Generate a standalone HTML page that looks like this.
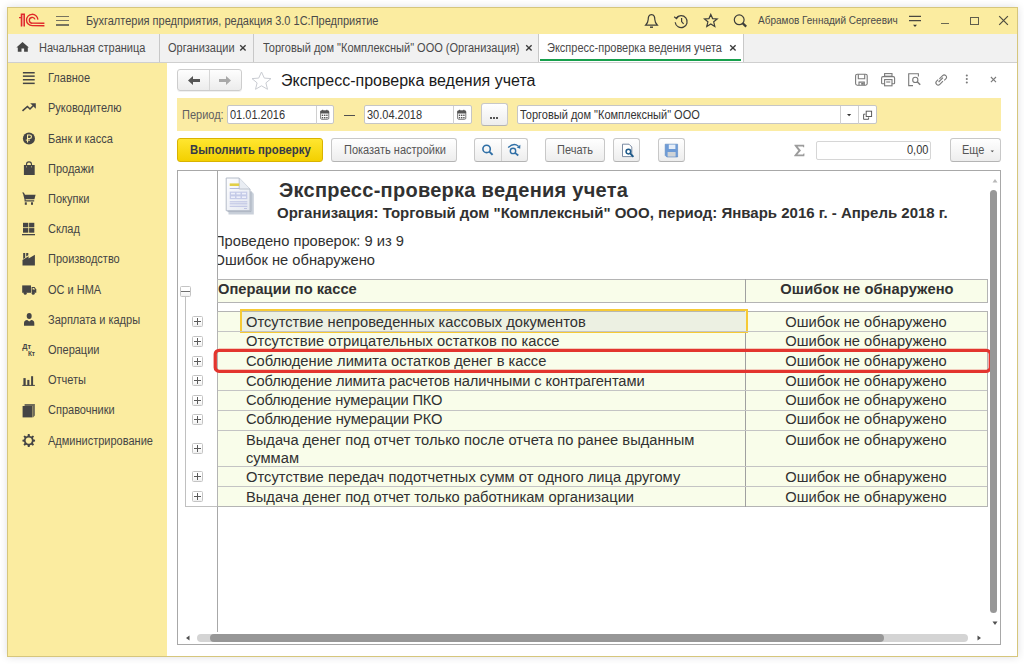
<!DOCTYPE html>
<html><head><meta charset="utf-8">
<style>
*{box-sizing:border-box;margin:0;padding:0}
html,body{width:1024px;height:664px;overflow:hidden;background:#fff;font-family:"Liberation Sans",sans-serif;color:#404040}
.a{position:absolute}
.t{position:absolute;white-space:nowrap;line-height:1}
#win{left:7px;top:7px;width:1011px;height:650px;border:1px solid #d6c67c;background:#fff;box-shadow:0 0 8px rgba(0,0,40,0.13)}
#title{left:8px;top:8px;width:1009px;height:26px;background:#fbeca0}
#tabs{left:8px;top:34px;width:1009px;height:29px;background:#f1f1f1;border-bottom:1px solid #cfcfcf}
#side{left:8px;top:63px;width:159px;height:593px;background:#fbeca0}
.sep{position:absolute;width:1px;background:#c8c8c8}
.pb{width:11px;height:11px;border:1px solid #c4c4c4;border-radius:1.5px;background:linear-gradient(#fff 50%,#f0f0f0)}
.pb::before{content:"";position:absolute;left:1px;top:4px;width:7px;height:1px;background:#5a5a5a}
.pb::after{content:"";position:absolute;left:4px;top:1px;width:1px;height:7px;background:#5a5a5a}
.si{font-size:12px;color:#454545;transform:scaleX(0.9167);transform-origin:0 0}
</style></head><body>
<div class="a" id="win"></div>
<div class="a" id="title"></div>
<div class="a" id="tabs"></div>
<div class="a" id="side"></div>

<!-- title bar -->
<svg class="a" style="left:16px;top:11px" width="32" height="19" viewBox="0 0 32 19">
  <path d="M5.4 3.2 H8.3 V15.3 H5.4 Z" fill="#f0a58a"/>
  <g fill="none" stroke="#e0282a" stroke-width="1.35">
    <path d="M3 6.6 H5.4 M5.4 15.4 V3.2 H8.3 V15.4"/>
    <path d="M21.9 8.6 A5.7 5.7 0 1 0 16.2 14.7 H28.4"/>
    <path d="M19 8.4 A2.9 2.9 0 1 0 16.3 12.2 H28.4"/>
  </g>
</svg>
<div class="a" style="left:56px;top:15.5px;width:13px;height:1.5px;background:#77735f"></div>
<div class="a" style="left:56px;top:19.8px;width:13px;height:1.5px;background:#77735f"></div>
<div class="a" style="left:56px;top:24.1px;width:13px;height:1.5px;background:#77735f"></div>
<div class="t" style="left:86px;top:15px;font-size:12px;transform:scaleX(0.9167);transform-origin:0 0;color:#4a4a4a">Бухгалтерия предприятия, редакция 3.0 1С:Предприятие</div>
<svg class="a" style="left:644px;top:13px" width="15" height="16" viewBox="0 0 15 16" fill="none" stroke="#3e3e3a" stroke-width="1.2">
  <path d="M7.5 1.6 C4.6 1.6 4.2 4.2 4.2 6.5 C4.2 9 3.2 10.4 1.6 12.2 H13.4 C11.8 10.4 10.8 9 10.8 6.5 C10.8 4.2 10.4 1.6 7.5 1.6 Z"/>
  <path d="M6 14.2 H9" stroke-width="1.4"/>
</svg>
<svg class="a" style="left:673px;top:13px" width="16" height="16" viewBox="0 0 16 16" fill="none" stroke="#3e3e3a" stroke-width="1.2">
  <path d="M3.2 5.2 A6 6 0 1 1 2.2 9.2"/>
  <path d="M1.2 3.8 L3.5 5.6 L5.4 3.4" stroke-width="1.2"/>
  <path d="M8.6 5 V8.6 L10.6 10.8"/>
</svg>
<svg class="a" style="left:703px;top:13px" width="16" height="15" viewBox="0 0 16 15" fill="none" stroke="#3e3e3a" stroke-width="1.2">
  <path d="M7.8 1.4 L9.6 5.6 L14.2 5.9 L10.7 8.8 L11.8 13.4 L7.8 10.9 L3.8 13.4 L4.9 8.8 L1.4 5.9 L6 5.6 Z"/>
</svg>
<svg class="a" style="left:733px;top:13px" width="16" height="16" viewBox="0 0 16 16" fill="none" stroke="#3e3e3a">
  <circle cx="6.2" cy="6.8" r="4.9" stroke-width="1.2"/>
  <path d="M9.8 10.4 L13.2 13.6" stroke-width="2.2"/>
</svg>
<div class="t" style="left:758px;top:15.5px;font-size:10px;color:#4a4a4a">Абрамов Геннадий Сергеевич</div>
<svg class="a" style="left:908px;top:14px" width="15" height="14" viewBox="0 0 15 14" fill="none" stroke="#4a4840" stroke-width="1.2">
  <path d="M1 2.3 H13 M1 6.6 H13"/>
  <path d="M5 10.8 H9 L7 13 Z" fill="#3a3a36" stroke="none"/>
</svg>
<div class="a" style="left:941px;top:23.2px;width:8px;height:1.3px;background:#6a6852"></div>
<div class="a" style="left:970px;top:17px;width:9px;height:8px;border:1.3px solid #5f5d4c"></div>
<svg class="a" style="left:998px;top:15px" width="11" height="11" viewBox="0 0 11 11" fill="none" stroke="#4e4c40" stroke-width="1.2"><path d="M1.2 1.2 L9.9 9.9 M9.9 1.2 L1.2 9.9"/></svg>

<!-- tabs -->
<svg class="a" style="left:16px;top:41px" width="14" height="12" viewBox="0 0 14 12"><path d="M6.5 0.9 L12.9 6.5 H11.8 V10.8 H8.1 V7.5 H5.5 V10.8 H1.8 V6.5 H0.4 Z" fill="#454545"/></svg>
<div class="t" style="left:39px;top:42px;font-size:12px;transform:scaleX(0.9167);transform-origin:0 0;color:#4a4a4a">Начальная страница</div>
<div class="sep" style="left:159px;top:34px;height:28px"></div>
<div class="t" style="left:168px;top:42px;font-size:12px;transform:scaleX(0.9167);transform-origin:0 0;color:#4a4a4a">Организации</div>
<svg class="a" style="left:239.3px;top:43.8px" width="8" height="8" viewBox="0 0 8 8"><path d="M1.2 1.2 L6.6 6.6 M6.6 1.2 L1.2 6.6" stroke="#3c3c3c" stroke-width="1.35" fill="none"/></svg>
<div class="sep" style="left:253px;top:34px;height:28px"></div>
<div class="t" style="left:263px;top:42px;font-size:12px;transform:scaleX(0.9167);transform-origin:0 0;color:#4a4a4a">Торговый дом "Комплексный" ООО (Организация)</div>
<svg class="a" style="left:524.5px;top:43.8px" width="8" height="8" viewBox="0 0 8 8"><path d="M1.2 1.2 L6.6 6.6 M6.6 1.2 L1.2 6.6" stroke="#3c3c3c" stroke-width="1.35" fill="none"/></svg>
<div class="a" style="left:538px;top:34px;width:206px;height:28px;background:#fff;border-left:1px solid #c8c8c8;border-right:1px solid #c8c8c8"></div>
<div class="a" style="left:540px;top:59px;width:201px;height:2px;background:#17a04c"></div>
<div class="t" style="left:547px;top:42px;font-size:12px;transform:scaleX(0.9167);transform-origin:0 0;color:#4a4a4a">Экспресс-проверка ведения учета</div>
<svg class="a" style="left:729.2px;top:43.8px" width="8" height="8" viewBox="0 0 8 8"><path d="M1.2 1.2 L6.6 6.6 M6.6 1.2 L1.2 6.6" stroke="#3c3c3c" stroke-width="1.35" fill="none"/></svg>

<!-- sidebar -->
<svg class="a" style="left:0;top:0" width="50" height="460" viewBox="0 0 50 460">
<g fill="#454545" stroke="none">
  <!-- главное -->
  <rect x="22.9" y="72" width="11.8" height="1.5"/>
  <rect x="22.9" y="75.4" width="11.8" height="1.5"/>
  <rect x="22.9" y="79" width="11.8" height="1.5"/>
  <rect x="22.9" y="82.6" width="11.8" height="1.5"/>
  <!-- руководителю -->
  <path d="M22.5 110.9 L27.4 106.5 L30 109 L33.2 105.8" fill="none" stroke="#454545" stroke-width="1.6"/>
  <path d="M30.2 103.2 L35.8 103.2 L35.8 108.8 Z"/>
  <!-- банк -->
  <circle cx="28.95" cy="138.45" r="6.05"/>
  <path d="M27 134.6 H29.7 Q32 134.6 32 136.7 Q32 138.9 29.7 138.9 H28.1 V142.4 H27 Z M28.1 135.6 V137.9 H29.6 Q30.9 137.9 30.9 136.75 Q30.9 135.6 29.6 135.6 Z" fill="#fbeca0"/>
  <rect x="25.8" y="139.6" width="4.2" height="1" fill="#fbeca0"/>
  <!-- продажи -->
  <path d="M23.9 165 H26.1 V167.2 H27 V165 H31 V167.2 H31.9 V165 H34.7 V175 H23.9 Z"/>
  <path d="M26.5 166.5 V164.5 Q26.5 161.9 29 161.9 Q31.5 161.9 31.5 164.5 V166.5" fill="none" stroke="#454545" stroke-width="1.1"/>
  <!-- покупки -->
  <path d="M22.1 192.6 H23.8 L25 194.7 H35.6 L34.4 199.2 H25.6 L25.6 200.3 H34.2 V201.4 H24.6 L24.5 199.5 L23.1 194 Z"/>
  <rect x="24.8" y="202.3" width="2" height="2.5"/>
  <rect x="31" y="202.3" width="2" height="2.5"/>
  <!-- склад -->
  <rect x="23" y="222.8" width="5.3" height="4.5"/>
  <rect x="29.1" y="222.8" width="5.2" height="4.5"/>
  <rect x="23" y="228.1" width="5.3" height="4.6"/>
  <rect x="29.1" y="228.1" width="5.2" height="4.6"/>
  <rect x="22" y="234" width="13" height="1.3"/>
  <!-- производство -->
  <path d="M22.5 260 L28.6 256.2 V258.6 L34.9 254.8 V265.5 H22.5 Z"/>
  <path d="M23.2 253 H25.2 V257.8 L23.2 259 Z M26.2 253 H28.3 V255.2 L26.2 256.5 Z"/>
  <!-- ОС и НМА (truck) -->
  <path d="M22.2 285.4 H31 V292.8 H22.2 Z"/>
  <path d="M31.6 287 H34.6 L36.3 289.5 V292.8 H31.6 Z"/>
  <path d="M32.6 287.9 H34 L35.2 289.6 H32.6 Z" fill="#fbeca0"/>
  <circle cx="25.2" cy="293.3" r="1.5"/>
  <circle cx="33.2" cy="293.3" r="1.5"/>
  <!-- зарплата -->
  <ellipse cx="29.2" cy="316" rx="2.5" ry="3"/>
  <path d="M24 325.8 V323.3 Q24 320.3 27.2 320.1 L29.2 321.6 L31.2 320.1 Q34.3 320.3 34.3 323.3 V325.8 Z"/>
  <!-- отчеты -->
  <rect x="23.4" y="378.1" width="2.3" height="7.3"/>
  <rect x="27.3" y="379.9" width="2.1" height="5.5"/>
  <rect x="31.1" y="376.2" width="2" height="9.2"/>
  <rect x="22.3" y="384.9" width="12.6" height="1"/>
  <!-- справочники -->
  <path d="M24.6 404 H34.9 V415.4 L33 417.4 V406 H24.6 Z" fill="#6e6b5a"/>
  <rect x="22.6" y="406" width="10" height="11.4"/>
</g>
<text x="22.3" y="348.8" font-family="Liberation Sans" font-weight="bold" font-size="7.3" fill="#454545">Дт</text>
<text x="27.9" y="355.9" font-family="Liberation Sans" font-weight="bold" font-size="6.5" fill="#454545">Кт</text>
<g transform="translate(28.75 440.3)" fill="#454545">
  <path d="M-0.9 -6.2 H0.9 L1.2 -4.4 L2.6 -3.8 L4.1 -4.9 L5.3 -3.7 L4.2 -2.2 L4.8 -0.9 L6.3 -0.6 V1.2 L4.8 1.5 L4.2 2.8 L5.3 4.3 L4.1 5.5 L2.6 4.4 L1.2 5 L0.9 6.6 H-0.9 L-1.2 5 L-2.6 4.4 L-4.1 5.5 L-5.3 4.3 L-4.2 2.8 L-4.8 1.5 L-6.3 1.2 V-0.6 L-4.8 -0.9 L-4.2 -2.2 L-5.3 -3.7 L-4.1 -4.9 L-2.6 -3.8 L-1.2 -4.4 Z"/>
  <circle cx="0" cy="0.3" r="3.1" fill="#fbeca0"/>
</g>
</svg>

<div class="t si" style="left:48px;top:72px">Главное</div>
<div class="t si" style="left:48px;top:102px">Руководителю</div>
<div class="t si" style="left:48px;top:133px">Банк и касса</div>
<div class="t si" style="left:48px;top:163px">Продажи</div>
<div class="t si" style="left:48px;top:193px">Покупки</div>
<div class="t si" style="left:48px;top:223px">Склад</div>
<div class="t si" style="left:48px;top:253px">Производство</div>
<div class="t si" style="left:48px;top:284px">ОС и НМА</div>
<div class="t si" style="left:48px;top:314px">Зарплата и кадры</div>
<div class="t si" style="left:48px;top:344px">Операции</div>
<div class="t si" style="left:48px;top:374px">Отчеты</div>
<div class="t si" style="left:48px;top:404px">Справочники</div>
<div class="t si" style="left:48px;top:435px">Администрирование</div>


<!-- main header -->
<div class="a" style="left:177px;top:69px;width:65px;height:22px;border:1px solid #cdcdcd;box-shadow:0 1px 0 rgba(0,0,0,0.06);border-radius:3px;background:linear-gradient(#fefefe,#ececec)"></div>
<div class="a" style="left:209px;top:70px;width:1px;height:20px;background:#d6d6d6"></div>
<svg class="a" style="left:187px;top:75px" width="14" height="11" viewBox="0 0 14 11"><path d="M1 5.5 L6 1 V4 H13 V7 H6 V10 Z" fill="#555"/></svg>
<svg class="a" style="left:218px;top:75px" width="14" height="11" viewBox="0 0 14 11"><path d="M13 5.5 L8 1 V4 H1 V7 H8 V10 Z" fill="#a8a8a8"/></svg>
<svg class="a" style="left:251px;top:71px" width="21" height="19" viewBox="0 0 21 19"><path d="M10.5 1 L13.3 7.1 L20 7.6 L14.9 11.9 L16.5 18.3 L10.5 14.8 L4.5 18.3 L6.1 11.9 L1 7.6 L7.7 7.1 Z" fill="none" stroke="#c9ccd2" stroke-width="1"/></svg>
<div class="t" style="left:281px;top:73px;font-size:16px;color:#1a1a1a">Экспресс-проверка ведения учета</div>

<!-- period panel -->
<div class="a" style="left:177px;top:98px;width:824px;height:33px;background:#fbeca4"></div>
<div class="t" style="left:181.5px;top:109px;font-size:12px;transform:scaleX(0.9167);transform-origin:0 0;color:#606060">Период:</div>
<div class="a" style="left:227px;top:105px;width:107px;height:19px;border:1px solid #c6c6c6;border-radius:2px;background:#fff"></div>
<div class="a" style="left:316px;top:106px;width:1px;height:18px;background:#d0d0d0"></div>
<div class="t" style="left:230px;top:109px;font-size:12px;transform:scaleX(0.9167);transform-origin:0 0;color:#333">01.01.2016</div>
<div class="a" style="left:343.7px;top:115px;width:11px;height:1.1px;background:#505050"></div>
<div class="a" style="left:364px;top:105px;width:108px;height:19px;border:1px solid #c6c6c6;border-radius:2px;background:#fff"></div>
<div class="a" style="left:453px;top:106px;width:1px;height:18px;background:#d0d0d0"></div>
<div class="t" style="left:367px;top:109px;font-size:12px;transform:scaleX(0.9167);transform-origin:0 0;color:#333">30.04.2018</div>
<div class="a" style="left:481px;top:103px;width:27px;height:23px;border:1px solid #c8c8c8;border-bottom-color:#b4b4b4;border-radius:3px;background:linear-gradient(#ffffff,#ededed)"></div>
<div class="a" style="left:490px;top:117px;width:2px;height:2px;background:#555"></div><div class="a" style="left:493.2px;top:117px;width:2px;height:2px;background:#555"></div><div class="a" style="left:496.4px;top:117px;width:2px;height:2px;background:#555"></div>
<div class="a" style="left:517px;top:105px;width:360px;height:19px;border:1px solid #c6c6c6;border-radius:2px;background:#fff"></div>
<div class="a" style="left:840px;top:106px;width:1px;height:18px;background:#d0d0d0"></div>
<div class="a" style="left:858px;top:106px;width:1px;height:18px;background:#d0d0d0"></div>
<div class="t" style="left:519.5px;top:109px;font-size:12px;transform:scaleX(0.9167);transform-origin:0 0;color:#333">Торговый дом "Комплексный" ООО</div>

<!-- command bar -->
<div class="a" style="left:177px;top:138px;width:146px;height:24px;border:1px solid #d9b300;border-radius:3px;background:linear-gradient(#ffe630,#f3d000)"></div>
<div class="t" style="left:190px;top:144px;font-size:12px;transform:scaleX(0.944);transform-origin:0 0;font-weight:bold;color:#363a48">Выполнить проверку</div>
<div class="a" style="left:331px;top:138px;width:126px;height:24px;border:1px solid #c8c8c8;border-bottom-color:#b4b4b4;border-radius:3px;background:linear-gradient(#ffffff,#ededed)"></div>
<div class="t" style="left:343.5px;top:144px;font-size:12px;transform:scaleX(0.9167);transform-origin:0 0;color:#555">Показать настройки</div>
<div class="a" style="left:474px;top:138px;width:54px;height:24px;border:1px solid #c8c8c8;border-bottom-color:#b4b4b4;border-radius:3px;background:linear-gradient(#ffffff,#ededed)"></div>
<div class="a" style="left:501px;top:139px;width:1px;height:22px;background:#d0d0d0"></div>
<div class="a" style="left:545px;top:138px;width:60px;height:24px;border:1px solid #c8c8c8;border-bottom-color:#b4b4b4;border-radius:3px;background:linear-gradient(#ffffff,#ededed)"></div>
<div class="t" style="left:557px;top:144px;font-size:12px;transform:scaleX(0.9167);transform-origin:0 0;color:#555">Печать</div>
<div class="a" style="left:613px;top:138px;width:27px;height:24px;border:1px solid #c8c8c8;border-bottom-color:#b4b4b4;border-radius:3px;background:linear-gradient(#ffffff,#ededed)"></div>
<div class="a" style="left:658px;top:138px;width:27px;height:24px;border:1px solid #c8c8c8;border-bottom-color:#b4b4b4;border-radius:3px;background:linear-gradient(#ffffff,#ededed)"></div>
<svg class="a" style="left:793px;top:144px" width="13" height="13" viewBox="0 0 13 13"><path d="M1.4 0.8 H11.2 V3.2 H10.2 L9.8 2.4 H4.6 L8 6.4 L4.4 10.6 H10 L10.5 9.6 H11.5 L11.3 12.2 H1.2 V11.6 L5.3 6.6 L1.4 1.6 Z" fill="#9c9c9c"/></svg>
<div class="a" style="left:816px;top:141px;width:115px;height:19px;border:1px solid #d6d6d6;border-radius:2px;background:#fff"></div>
<div class="t" style="left:907px;top:144px;font-size:12px;transform:scaleX(0.9167);transform-origin:0 0;color:#333">0,00</div>
<div class="a" style="left:950px;top:138px;width:51px;height:24px;border:1px solid #c8c8c8;border-bottom-color:#b4b4b4;border-radius:3px;background:linear-gradient(#ffffff,#ededed)"></div>
<div class="t" style="left:962px;top:144px;font-size:12px;transform:scaleX(0.9167);transform-origin:0 0;color:#555">Еще</div>


<!-- field icons -->
<svg class="a" style="left:0;top:0" width="1024" height="170" viewBox="0 0 1024 170">
  <g id="cal">
    <rect x="320.6" y="111" width="8.2" height="8.3" rx="1.2" fill="#fff" stroke="#6a6a6a" stroke-width="0.9"/>
    <rect x="320.3" y="110.6" width="8.8" height="2.8" rx="1" fill="#555"/>
    <rect x="322" y="109.8" width="1.2" height="1.6" fill="#555"/><rect x="326.2" y="109.8" width="1.2" height="1.6" fill="#555"/>
    <g fill="#555"><rect x="321.8" y="114.6" width="1.4" height="1.4"/><rect x="324" y="114.6" width="1.4" height="1.4"/><rect x="326.2" y="114.6" width="1.4" height="1.4"/>
    <rect x="321.8" y="117" width="1.4" height="1.4"/><rect x="324" y="117" width="1.4" height="1.4"/><rect x="326.2" y="117" width="1.4" height="1.4"/></g>
  </g>
  <g transform="translate(137 0)">
    <rect x="320.6" y="111" width="8.2" height="8.3" rx="1.2" fill="#fff" stroke="#6a6a6a" stroke-width="0.9"/>
    <rect x="320.3" y="110.6" width="8.8" height="2.8" rx="1" fill="#555"/>
    <rect x="322" y="109.8" width="1.2" height="1.6" fill="#555"/><rect x="326.2" y="109.8" width="1.2" height="1.6" fill="#555"/>
    <g fill="#555"><rect x="321.8" y="114.6" width="1.4" height="1.4"/><rect x="324" y="114.6" width="1.4" height="1.4"/><rect x="326.2" y="114.6" width="1.4" height="1.4"/>
    <rect x="321.8" y="117" width="1.4" height="1.4"/><rect x="324" y="117" width="1.4" height="1.4"/><rect x="326.2" y="117" width="1.4" height="1.4"/></g>
  </g>
  <path d="M847 114 H851.2 L849.1 116.2 Z" fill="#333"/>
  <g fill="none" stroke="#555" stroke-width="0.95">
    <rect x="866.2" y="111.2" width="5.4" height="5.3"/>
    <path d="M865.4 114.2 H863.6 V119.3 H868.6 V117.4"/>
  </g>
  <!-- search buttons -->
  <g fill="none" stroke="#2f6fa6">
    <circle cx="486.6" cy="148.9" r="3.7" stroke-width="1.6"/>
    <path d="M489.3 151.6 L492.6 154.9" stroke-width="2"/>
    <path d="M508.2 147.6 Q513.5 142.3 518.5 146.2" stroke-width="1.3"/>
    <circle cx="513" cy="150.9" r="2.7" stroke-width="1.4"/>
    <path d="M515 152.9 L518.3 155.5" stroke-width="1.7"/>
  </g>
  <path d="M516.8 147.6 L520.4 144.7 L520.2 148.8 Z" fill="#2f6fa6"/>
  <!-- doc preview -->
  <path d="M622.5 144.2 H629 L631.8 147 V156.6 H622.5 Z" fill="#fff" stroke="#6d7f99" stroke-width="0.9"/>
  <circle cx="628.4" cy="151.6" r="2.3" fill="#fff" stroke="#1d5a8a" stroke-width="1.5"/>
  <path d="M630.1 153.3 L633.4 156.8" stroke="#1d5a8a" stroke-width="1.9"/>
  <!-- save blue -->
  <path d="M665.2 144.2 H677.6 V157 H666.8 L665.2 155.4 Z" fill="#6e9bd6" stroke="#5a86c0" stroke-width="0.6"/>
  <rect x="668.8" y="144.6" width="6.6" height="4.4" fill="#e6eef8"/>
  <rect x="667.6" y="152" width="8" height="4.6" fill="#cfd3d6"/>
  <!-- header icons grey -->
  <g fill="none" stroke="#7a7a7a" stroke-width="1.1">
    <rect x="855.6" y="74.2" width="11.6" height="11" rx="1.6"/>
    <path d="M858.3 74.2 V78.8 H864.7 V74.2"/>
    <path d="M859 85.2 V82.1 H864.3 V85.2"/>
    <rect x="884.6" y="73.6" width="7.4" height="2.6"/>
    <path d="M884.3 83.8 H882.3 Q881.6 83.8 881.6 83 V78 Q881.6 76.6 883 76.6 H893.2 Q894.6 76.6 894.6 78 V83 Q894.6 83.8 893.8 83.8 H891.8"/>
    <rect x="884.6" y="79.6" width="7.4" height="6.2"/>
    <path d="M886.2 82 H890.3"/>
    <path d="M913 85.6 H908.7 V73.8 H918.4 V76.4"/>
    <circle cx="915.3" cy="79.9" r="2.6"/>
    <path d="M917.2 81.8 L920.2 84.8" stroke-width="1.5"/>
    <path d="M939.4 78.8 L942.6 75.6 Q944.2 74 945.8 75.6 Q947.4 77.2 945.8 78.8 L944.2 80.4"/>
    <path d="M938.2 79.6 L936.6 81.2 Q935 82.8 936.6 84.4 Q938.2 86 939.8 84.4 L943 81.2"/>
    <path d="M938.6 82 L943 77.6"/>
    <path d="M990.9 77 L996 82.1 M996 77 L990.9 82.1"/>
  </g>
  <g fill="#7a7a7a"><circle cx="966.8" cy="75.5" r="1.05"/><circle cx="966.8" cy="79" r="1.05"/><circle cx="966.8" cy="82.5" r="1.05"/></g>
  <path d="M854.5 81.6 L867.6 81.6" stroke="none"/>
  <rect x="861.2" y="83" width="2.6" height="1.8" fill="#7a7a7a"/>
  <!-- еще arrow -->
  <path d="M990.6 150.4 H994 L992.3 152.2 Z" fill="#555"/>
</svg>

<!-- report -->
<div class="a" style="left:177px;top:170px;width:824px;height:475px;border:1px solid #a8a8a8;background:#fff"></div>
<div class="a" style="left:217px;top:171px;width:1px;height:461px;background:#a8a8a8"></div>

<!-- report content -->
<svg class="a" style="left:225px;top:177px" width="31" height="39" viewBox="0 0 31 39">
  <defs><linearGradient id="pg" x1="0" y1="0" x2="1" y2="1"><stop offset="0" stop-color="#fdfdff"/><stop offset="1" stop-color="#e4e8f0"/></linearGradient></defs>
  <path d="M3.5 15 H26.5 Q28.8 15 28.8 17.5 V37.5 H3.5 Z" fill="#c9d0da"/>
  <path d="M26 14 V34.6 H2.5" fill="none" stroke="#aeb6c2" stroke-width="1"/>
  <path d="M1.2 1 H14.2 L25 12 V33.7 H1.2 Z" fill="url(#pg)" stroke="#b4bcc8" stroke-width="1"/>
  <path d="M14.2 1 V12 H25" fill="#e9edf3" stroke="#b4bcc8" stroke-width="0.9"/>
  <rect x="4.7" y="6.4" width="9.5" height="2.6" fill="#e2cf48"/>
  <rect x="4.7" y="11" width="9.5" height="0.9" fill="#aab2da"/>
  <rect x="4.7" y="14.6" width="17.6" height="7.6" fill="#c5cbe8"/>
  <g fill="#eef0fa"><rect x="6" y="15.8" width="4" height="1.6"/><rect x="11.5" y="15.8" width="4" height="1.6"/><rect x="17" y="15.8" width="4" height="1.6"/>
  <rect x="6" y="19.4" width="4" height="1.6"/><rect x="11.5" y="19.4" width="4" height="1.6"/><rect x="17" y="19.4" width="4" height="1.6"/></g>
  <rect x="4.7" y="24.4" width="17.6" height="0.9" fill="#b4bae0"/>
  <rect x="4.7" y="26.4" width="17.6" height="0.9" fill="#b4bae0"/>
  <rect x="4.7" y="28.8" width="17.6" height="0.9" fill="#b4bae0"/>
  <rect x="19" y="31" width="3" height="0.8" fill="#b4bae0"/>
</svg>
<div class="t" style="left:279px;top:180px;font-size:20px;font-weight:bold;letter-spacing:0.27px;color:#313131">Экспресс-проверка ведения учета</div>
<div class="t" style="left:277px;top:205.2px;font-size:15px;font-weight:bold;color:#313131">Организация: Торговый дом "Комплексный" ООО, период: Январь 2016 г. - Апрель 2018 г.</div>
<div class="a" style="left:218px;top:225px;width:300px;height:50px;overflow:hidden">
  <div class="t" style="left:-4px;top:8.8px;font-size:14.7px;color:#313131">Проведено проверок: 9 из 9</div>
  <div class="t" style="left:-4.5px;top:28.3px;font-size:14.7px;color:#313131">Ошибок не обнаружено</div>
</div>
<!-- header row -->
<div class="a" style="left:217px;top:279px;width:771px;height:24px;border:1px solid #b4b4b4;background:#f9fdea"></div>
<div class="a" style="left:745px;top:279px;width:1px;height:24px;background:#a0a0a0"></div>
<div class="t" style="left:218px;top:282.3px;font-size:14.7px;font-weight:bold;color:#313131">Операции по кассе</div>
<div class="t" style="left:746px;width:242px;text-align:center;top:282.3px;font-size:14.7px;font-weight:bold;letter-spacing:0.08px;color:#313131">Ошибок не обнаружено</div>
<!-- data rows -->
<div class="a" style="left:217px;top:311px;width:771px;height:196px;background:#f9fdea;border:1px solid #b4b4b4"></div>
<div class="a" style="left:745px;top:311px;width:1px;height:196px;background:#a0a0a0"></div>
<div class="a" style="left:240px;top:309.3px;width:508px;height:23.6px;border:2px solid #f6ca35;background:#ecf0e2"></div>
<div class="a" style="left:242px;top:311.3px;width:503px;height:1px;background:#b8b8b0"></div>
<div class="t" style="left:246px;top:315px;font-size:14.7px;letter-spacing:0px;color:#313131">Отсутствие непроведенных кассовых документов</div>
<div class="t" style="left:745px;width:242px;text-align:center;top:315px;font-size:14.7px;letter-spacing:0px;color:#313131">Ошибок не обнаружено</div>
<div class="a pb" style="left:192px;top:316px"></div>
<div class="a" style="left:218px;top:331.3px;width:769px;height:1px;background:#c4c4c4"></div>
<div class="t" style="left:246px;top:334px;font-size:14.7px;letter-spacing:0.07px;color:#313131">Отсутствие отрицательных остатков по кассе</div>
<div class="t" style="left:745px;width:242px;text-align:center;top:334px;font-size:14.7px;letter-spacing:0px;color:#313131">Ошибок не обнаружено</div>
<div class="a pb" style="left:192px;top:336px"></div>
<div class="a" style="left:218px;top:351.0px;width:769px;height:1px;background:#c4c4c4"></div>
<div class="t" style="left:246px;top:354px;font-size:14.7px;letter-spacing:0px;color:#313131">Соблюдение лимита остатков денег в кассе</div>
<div class="t" style="left:745px;width:242px;text-align:center;top:354px;font-size:14.7px;letter-spacing:0px;color:#313131">Ошибок не обнаружено</div>
<div class="a pb" style="left:192px;top:356px"></div>
<div class="a" style="left:218px;top:371.0px;width:769px;height:1px;background:#c4c4c4"></div>
<div class="t" style="left:246px;top:373.6px;font-size:14.7px;letter-spacing:-0.104px;color:#313131">Соблюдение лимита расчетов наличными с контрагентами</div>
<div class="t" style="left:745px;width:242px;text-align:center;top:373.6px;font-size:14.7px;letter-spacing:0px;color:#313131">Ошибок не обнаружено</div>
<div class="a pb" style="left:192px;top:375px"></div>
<div class="a" style="left:218px;top:390.2px;width:769px;height:1px;background:#c4c4c4"></div>
<div class="t" style="left:246px;top:393px;font-size:14.7px;letter-spacing:-0.167px;color:#313131">Соблюдение нумерации ПКО</div>
<div class="t" style="left:745px;width:242px;text-align:center;top:393px;font-size:14.7px;letter-spacing:0px;color:#313131">Ошибок не обнаружено</div>
<div class="a pb" style="left:192px;top:395px"></div>
<div class="a" style="left:218px;top:409.9px;width:769px;height:1px;background:#c4c4c4"></div>
<div class="t" style="left:246px;top:412px;font-size:14.7px;letter-spacing:-0.133px;color:#313131">Соблюдение нумерации РКО</div>
<div class="t" style="left:745px;width:242px;text-align:center;top:412px;font-size:14.7px;letter-spacing:0px;color:#313131">Ошибок не обнаружено</div>
<div class="a pb" style="left:192px;top:414px"></div>
<div class="a" style="left:218px;top:429.5px;width:769px;height:1px;background:#c4c4c4"></div>
<div class="t" style="left:246px;top:432.6px;font-size:14.7px;letter-spacing:0.01px;color:#313131">Выдача денег под отчет только после отчета по ранее выданным</div>
<div class="t" style="left:246px;top:451px;font-size:14.7px;color:#313131">суммам</div>
<div class="t" style="left:745px;width:242px;text-align:center;top:432.6px;font-size:14.7px;letter-spacing:0px;color:#313131">Ошибок не обнаружено</div>
<div class="a pb" style="left:192px;top:443px"></div>
<div class="a" style="left:218px;top:466.2px;width:769px;height:1px;background:#c4c4c4"></div>
<div class="t" style="left:246px;top:470px;font-size:14.7px;letter-spacing:0.03px;color:#313131">Отсутствие передач подотчетных сумм от одного лица другому</div>
<div class="t" style="left:745px;width:242px;text-align:center;top:470px;font-size:14.7px;letter-spacing:0px;color:#313131">Ошибок не обнаружено</div>
<div class="a pb" style="left:192px;top:471px"></div>
<div class="a" style="left:218px;top:486.2px;width:769px;height:1px;background:#c4c4c4"></div>
<div class="t" style="left:246px;top:490px;font-size:14.7px;letter-spacing:0px;color:#313131">Выдача денег под отчет только работникам организации</div>
<div class="t" style="left:745px;width:242px;text-align:center;top:490px;font-size:14.7px;letter-spacing:0px;color:#313131">Ошибок не обнаружено</div>
<div class="a pb" style="left:192px;top:491px"></div>
<!-- tree -->
<div class="a" style="left:180px;top:286px;width:11px;height:11px;border:1px solid #c4c4c4;border-radius:1.5px;background:linear-gradient(#fff 50%,#f0f0f0)"></div>
<div class="a" style="left:181px;top:291px;width:9px;height:1px;background:#707070"></div>
<div class="a" style="left:185px;top:297px;width:1px;height:209px;background:#c0c0c0"></div>
<div class="a" style="left:185px;top:506px;width:32px;height:1px;background:#c0c0c0"></div>
<!-- red highlight -->
<svg class="a" style="left:210px;top:345px" width="785" height="32" viewBox="0 0 785 32"><rect x="5.25" y="5.3" width="775" height="21" rx="3.8" fill="none" stroke="#e3352e" stroke-width="3.3"/></svg>
<!-- scrollbars -->
<div class="a" style="left:990px;top:190px;width:7px;height:423px;border-radius:4px;background:#979797"></div>
<svg class="a" style="left:992px;top:178px" width="6" height="6" viewBox="0 0 6 6"><path d="M0.5 4.5 L3 1 L5.5 4.5Z" fill="#b8b8b8"/></svg>
<svg class="a" style="left:992px;top:620px" width="6" height="6" viewBox="0 0 6 6"><path d="M0.5 1.5 L3 5 L5.5 1.5Z" fill="#505050"/></svg>
<div class="a" style="left:197px;top:634px;width:771px;height:7.5px;border-radius:4px;background:#d4d4d4"></div>
<div class="a" style="left:210px;top:634px;width:674px;height:7.5px;border-radius:4px;background:#979797"></div>
<svg class="a" style="left:185px;top:635px" width="6" height="6" viewBox="0 0 6 6"><path d="M4.5 0.5 L1 3 L4.5 5.5Z" fill="#505050"/></svg>
<svg class="a" style="left:976px;top:635px" width="6" height="6" viewBox="0 0 6 6"><path d="M1.5 0.5 L5 3 L1.5 5.5Z" fill="#505050"/></svg>
</body></html>
